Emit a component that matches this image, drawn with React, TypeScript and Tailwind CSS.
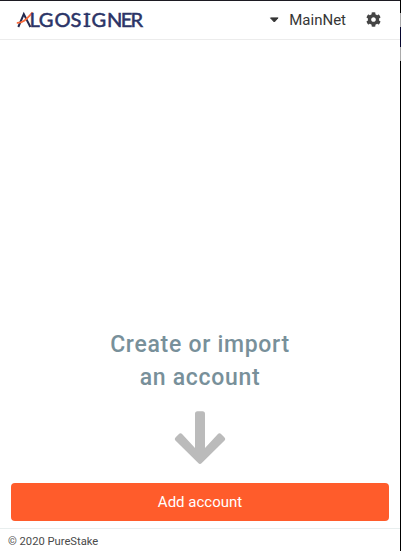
import { FaCog } from "react-icons/fa";

function Logo() {
  return (
    <svg className="overflow-visible" width="128" height="20" viewBox="0 0 128 20" role="img" aria-label="AlgoSigner">
      <path d="M2.3 17 L7.8 4 L14.4 17" fill="none" stroke="#23294f" strokeWidth="2" />
      <path d="M0.8 12.8 C6.5 13 9.5 10.5 16.6 2.4" fill="none" stroke="#fa6b3c" strokeWidth="1.8" />
      <text
        transform="scale(1.08 1)"
        x="12.6 21 35.6 50.4 62.9 69.8 84.3 97.1 106"
        y="16.9"
        fill="#2b3467"
        stroke="#2b3467"
        strokeWidth="0.5"
        fontFamily="Lato, 'Liberation Sans', sans-serif"
        fontSize="18.6"
      >
        LGOSIGNER
      </text>
      <path d="M67.6 4.3h6.8M67.6 16.2h6.8" stroke="#2b3467" strokeWidth="1.5" />
    </svg>
  );
}

function Header() {
  return (
    <header className="flex h-10 shrink-0 items-center border-t border-b border-t-[#1c1a22] border-b-[#ececec] pl-4 pr-[19px]">
      <Logo />
      <div className="ml-auto flex items-center text-[15px] text-[#363636]">
        <svg className="mr-2.5" width="10" height="6" viewBox="0 0 10 6">
          <path d="M1.5 .9h7.6L5.3 5z" fill="#363636" stroke="#363636" strokeLinejoin="round" />
        </svg>
        <span>MainNet</span>
        <FaCog className="mb-px ml-5 text-[15px] text-[#454545]" />
      </div>
    </header>
  );
}

export default function App() {
  return (
    <div className="flex h-[551px] w-[401px] bg-white font-['Roboto',sans-serif]">
      <div className="flex w-[400px] flex-col">
        <Header />
        <main className="flex flex-1 flex-col items-center justify-end px-[11px] pb-[7px]">
          <h1 className="text-center text-[23px] leading-[33px] font-medium tracking-[0.7px] text-[#78909a]">
            Create or import
            <br />
            an account
          </h1>
          <svg className="mt-[17px]" width="52" height="53" viewBox="0 0 52 53">
            <path
              d="M23.5 0.3h5q2.5 0 2.5 2.5V37L43.7 23.2q1.8-1.8 3.6 0l3 3q1.8 1.8 0 3.6L27.8 52.1q-1.8 1.8-3.6 0L1.7 29.8q-1.8-1.8 0-3.6l3-3q1.8-1.8 3.6 0L21 37V2.8Q21 0.3 23.5 0.3z"
              fill="#bbb"
            />
          </svg>
          <button className="mt-[19px] h-[38px] w-full shrink-0 rounded bg-[#ff5c2b] text-[15px] text-white">Add account</button>
        </main>
        <footer className="h-[23px] shrink-0 border-t border-[#e8eeee] pl-2 text-[11.2px] leading-[25px] text-[#4a4a4a]">
          © 2020 PureStake
        </footer>
      </div>
      <div className="flex w-px flex-col bg-black">
        <div className="mt-[13px] h-3.5 bg-[#a9a9a9]" />
        <div className="h-5 bg-[#05052e]" />
        <div className="h-3.5 bg-[#a9a9a9]" />
      </div>
    </div>
  );
}
